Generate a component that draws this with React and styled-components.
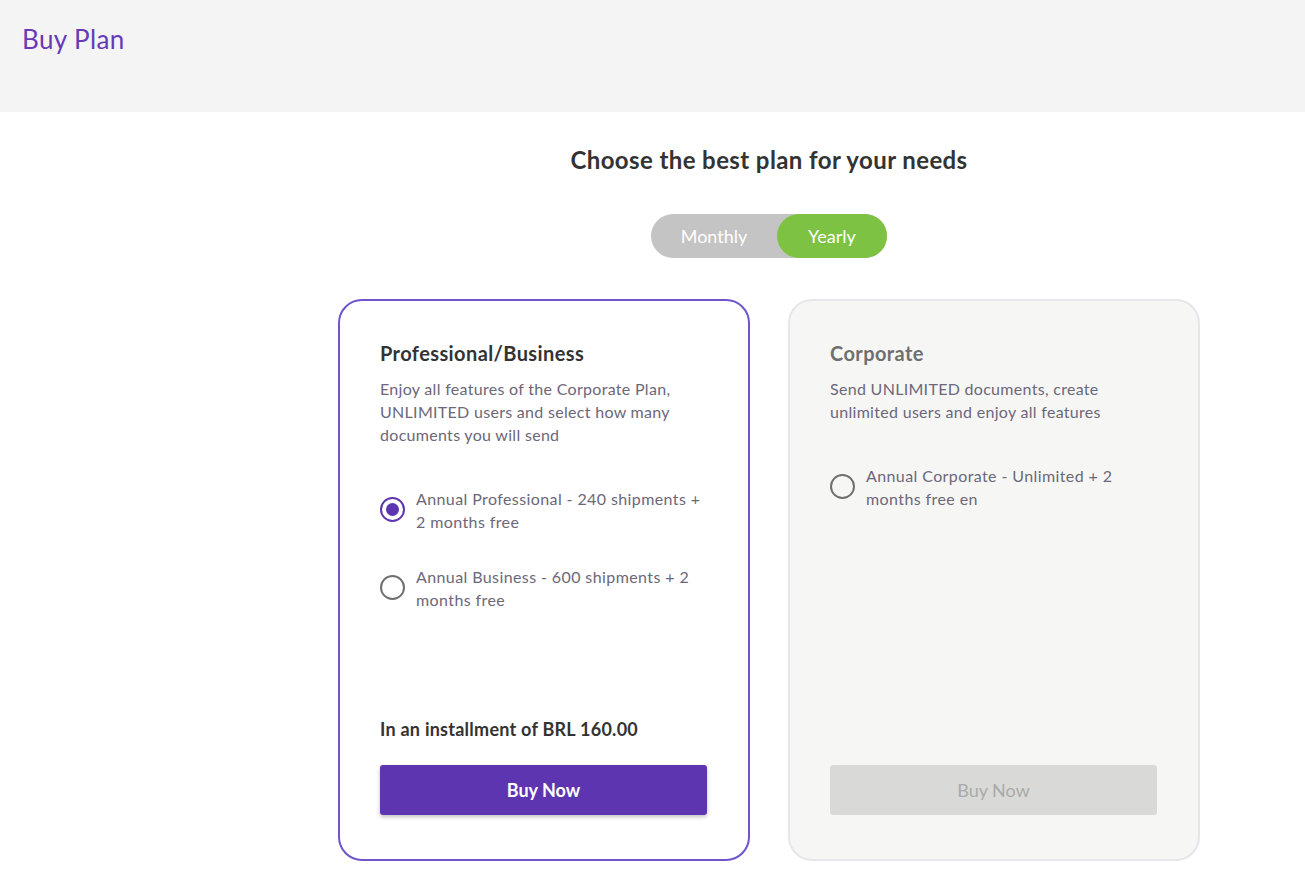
import React, { useState } from "react";
import styled, { createGlobalStyle } from "styled-components";

const GlobalStyle = createGlobalStyle`
  body {
    margin: 0;
    background: #ffffff;
    font-family: "Lato", "Open Sans", sans-serif;
    color: #333333;
  }
`;

const Header = styled.header`
  height: 112px;
  background: #f4f4f4;
  padding: 23px 22px 0;
  box-sizing: border-box;
`;

const PageTitle = styled.h1`
  margin: 0;
  font-size: 26px;
  font-weight: 400;
  letter-spacing: 0.4px;
  color: #673ab7;
`;

const Main = styled.main`
  padding-left: 233px;
  display: flex;
  flex-direction: column;
  align-items: center;
`;

const Heading = styled.h2`
  margin: 33px 0 0;
  font-size: 24px;
  font-weight: 700;
  color: #333333;
  letter-spacing: 0.4px;
`;

const Toggle = styled.div`
  margin-top: 40px;
  display: flex;
  width: 236px;
  height: 44px;
  border-radius: 22px;
  background: #c4c4c4;
`;

const ToggleOption = styled.button`
  border: 0;
  outline: 0;
  cursor: pointer;
  height: 44px;
  border-radius: 22px;
  font-family: inherit;
  font-size: 18px;
  color: #ffffff;
  background: ${p => (p.$active ? "#7dc242" : "transparent")};
  width: ${p => p.$width}px;
  padding: 0;
`;

const Cards = styled.div`
  margin-top: 41px;
  display: flex;
  gap: 38px;
`;

const Card = styled.section`
  width: 412px;
  height: 562px;
  box-sizing: border-box;
  border-radius: 24px;
  border: 2px solid ${p => (p.$active ? "#6f55c9" : "#e6e6ea")};
  background: ${p => (p.$active ? "#ffffff" : "#f6f7f5")};
  padding: 40px 41px 44px 40px;
  display: flex;
  flex-direction: column;
`;

const CardTitle = styled.h3`
  margin: 0;
  font-size: 20px;
  font-weight: 700;
  line-height: 24px;
  letter-spacing: 0.4px;
  color: ${p => (p.$active ? "#333333" : "#6f6f6f")};
`;

const Description = styled.p`
  margin: 12px 0 0;
  font-size: 16px;
  line-height: 23px;
  letter-spacing: 0.3px;
  color: #6c6779;
`;

const Options = styled.div`
  margin-top: 41px;
  display: flex;
  flex-direction: column;
  gap: 32px;
`;

const Option = styled.label`
  display: flex;
  align-items: flex-start;
  gap: 11px;
  cursor: pointer;
  font-size: 16px;
  line-height: 23px;
  letter-spacing: 0.4px;
  color: #6c6779;
`;

const Radio = styled.span`
  flex: none;
  width: 25px;
  height: 25px;
  box-sizing: border-box;
  border-radius: 50%;
  border: 2px solid ${p => (p.$checked ? "#5e35b1" : "#6f6f6f")};
  display: flex;
  align-items: center;
  justify-content: center;
  margin-top: ${p => p.$offset}px;

  &::after {
    content: "";
    width: 13px;
    height: 13px;
    border-radius: 50%;
    background: #5e35b1;
    display: ${p => (p.$checked ? "block" : "none")};
  }
`;

const Footer = styled.div`
  margin-top: auto;
  display: flex;
  flex-direction: column;
`;

const Price = styled.div`
  font-size: 18px;
  font-weight: 700;
  letter-spacing: 0.25px;
  color: #333333;
  margin-bottom: 25px;
`;

const BuyButton = styled.button`
  width: 100%;
  height: 50px;
  border: 0;
  border-radius: 3px;
  font-family: inherit;
  font-size: 18px;
  font-weight: ${p => (p.disabled ? 400 : 700)};
  color: ${p => (p.disabled ? "#a9aaa8" : "#ffffff")};
  background: ${p => (p.disabled ? "#d9dad8" : "#5e35b1")};
  box-shadow: ${p => (p.disabled ? "none" : "0 2px 4px rgba(0,0,0,0.25)")};
  cursor: ${p => (p.disabled ? "default" : "pointer")};
`;

const plans = [
  {
    id: "pro",
    title: "Professional/Business",
    description:
      "Enjoy all features of the Corporate Plan, UNLIMITED users and select how many documents you will send",
    options: [
      "Annual Professional - 240 shipments + 2 months free",
      "Annual Business - 600 shipments + 2 months free",
    ],
    price: "In an installment of BRL 160.00",
  },
  {
    id: "corp",
    title: "Corporate",
    description: "Send UNLIMITED documents, create unlimited users and enjoy all features",
    options: ["Annual Corporate - Unlimited + 2 months free en"],
  },
];

export default function App() {
  const [period, setPeriod] = useState("yearly");
  const [selected, setSelected] = useState({ plan: "pro", index: 0 });

  return (
    <>
      <GlobalStyle />
      <Header>
        <PageTitle>Buy Plan</PageTitle>
      </Header>
      <Main>
        <Heading>Choose the best plan for your needs</Heading>
        <Toggle>
          <ToggleOption
            $width={126}
            $active={period === "monthly"}
            onClick={() => setPeriod("monthly")}
          >
            Monthly
          </ToggleOption>
          <ToggleOption
            $width={110}
            $active={period === "yearly"}
            onClick={() => setPeriod("yearly")}
          >
            Yearly
          </ToggleOption>
        </Toggle>
        <Cards>
          {plans.map(plan => {
            const active = selected.plan === plan.id;
            return (
              <Card key={plan.id} $active={active}>
                <CardTitle $active={active}>{plan.title}</CardTitle>
                <Description>{plan.description}</Description>
                <Options>
                  {plan.options.map((opt, i) => {
                    const checked = active && selected.index === i;
                    return (
                      <Option key={opt} onClick={() => setSelected({ plan: plan.id, index: i })}>
                        <Radio $checked={checked} $offset={10} />
                        <span>{opt}</span>
                      </Option>
                    );
                  })}
                </Options>
                <Footer>
                  {active && plan.price && <Price>{plan.price}</Price>}
                  <BuyButton disabled={!active}>Buy Now</BuyButton>
                </Footer>
              </Card>
            );
          })}
        </Cards>
      </Main>
    </>
  );
}
